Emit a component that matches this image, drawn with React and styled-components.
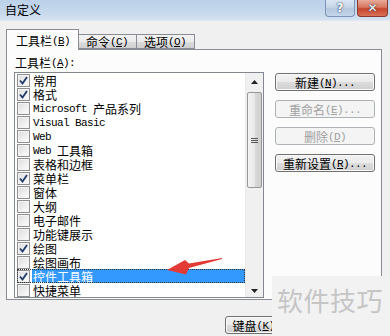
import React from "react";
import styled, { createGlobalStyle } from "styled-components";

const GlobalStyle = createGlobalStyle`
  html, body {
    margin: 0;
    padding: 0;
    background: #f0f0f0;
  }
  body {
    font-family: "Noto Sans CJK SC", "Noto Sans", sans-serif;
    font-size: 12px;
    color: #000;
  }
`;

const Window = styled.div`
  position: relative;
  width: 390px;
  height: 336px;
  overflow: hidden;
  display: flex;
  flex-direction: column;
  background: #f0f0f0;
`;

const TitleBar = styled.div`
  height: 20px;
  flex: none;
  display: flex;
  align-items: flex-start;
  background: linear-gradient(to bottom, #bcd1e9 0%, #c6d8ec 60%, #d4e2f1 100%);
  border-bottom: 1px solid #dfe8f2;
`;

const Title = styled.div`
  flex: 1;
  padding: 2px 0 0 5px;
  font-size: 12px;
  line-height: 16px;
  color: #000;
`;

const CaptionButton = styled.div`
  height: 17px;
  display: flex;
  align-items: center;
  justify-content: center;
  box-sizing: border-box;
  border: 1px solid ${(p) => (p.$close ? "#8a3a2e" : "#7b94b8")};
  border-top: none;
  border-radius: 0 0 4px 4px;
  background: ${(p) =>
    p.$close
      ? "linear-gradient(to bottom, #e9a999 0%, #d7785f 45%, #c5452c 55%, #d9725a 100%)"
      : "linear-gradient(to bottom, #dbe6f3 0%, #c7d6e8 45%, #b3c7de 55%, #c4d6ea 100%)"};
  width: ${(p) => (p.$close ? "31px" : "30px")};
  margin-right: 2px;
  color: #fff;
  font-family: "DejaVu Sans", sans-serif;
  font-weight: bold;
  font-size: 12px;
  line-height: 14px;
  text-shadow: 0 0 2px #2b3f5c, 0 0 1px #2b3f5c;
`;

const Body = styled.div`
  flex: 1;
  display: flex;
  flex-direction: column;
  padding: 8px 8px 0 6px;
`;

const TabStrip = styled.div`
  display: flex;
  align-items: flex-end;
  height: 20px;
  position: relative;
  z-index: 1;
`;

const Tab = styled.div`
  box-sizing: border-box;
  width: ${(p) => p.$w}px;
  height: ${(p) => (p.$active ? "21px" : "15px")};
  margin-bottom: ${(p) => (p.$active ? "-1px" : "0")};
  padding-left: ${(p) => (p.$active ? "9px" : "7px")};
  display: flex;
  align-items: center;
  border: 1px solid #898c95;
  border-bottom: ${(p) => (p.$active ? "none" : "1px solid #898c95")};
  border-left: ${(p) => (p.$first ? "1px solid #898c95" : "none")};
  background: ${(p) =>
    p.$active ? "#fcfcfc" : "linear-gradient(to bottom, #f2f2f2 0%, #ebebeb 50%, #dddddd 51%, #cfcfcf 100%)"};
  font-size: 12px;
  line-height: 13px;
  white-space: nowrap;
`;

const Panel = styled.div`
  box-sizing: border-box;
  width: 376px;
  height: 251px;
  border: 1px solid #898c95;
  background: #fcfcfc;
  display: flex;
  gap: 11px;
  padding: 0 0 0 7px;
`;

const LeftColumn = styled.div`
  display: flex;
  flex-direction: column;
  width: 250px;
`;

const FieldLabel = styled.div`
  height: 22px;
  padding: 3px 0 0 1px;
  display: flex;
  align-items: center;
  box-sizing: border-box;
  font-size: 12px;
  line-height: 14px;
`;

const ListBox = styled.div`
  box-sizing: border-box;
  height: 226px;
  border: 1px solid #828790;
  background: #fff;
  display: flex;
  overflow: hidden;
`;

const Rows = styled.div`
  flex: 1;
  display: flex;
  flex-direction: column;
  padding-left: 2px;
  overflow: hidden;
`;

const Row = styled.div`
  height: 14px;
  flex: none;
  display: flex;
  align-items: center;
  gap: 2px;
  outline: ${(p) => (p.$focus ? "1px dotted #333" : "none")};
  outline-offset: -1px;
`;

const Box = styled.span`
  box-sizing: border-box;
  width: 13px;
  height: 13px;
  flex: none;
  border: 1px solid #8e8f8f;
  background: linear-gradient(135deg, #dcdcdc 0%, #f0f0f0 60%, #fdfdfd 100%);
  box-shadow: inset 0 0 0 1px #f4f4f4;
  display: flex;
  align-items: center;
  justify-content: center;
`;

const ItemText = styled.span`
  height: 14px;
  display: flex;
  align-items: center;
  padding: 0 1px;
  flex: ${(p) => (p.$selected ? "1" : "none")};
  background: ${(p) => (p.$selected ? "#3399ff" : "transparent")};
  color: ${(p) => (p.$selected ? "#fff" : "#000")};
  font-size: 12px;
  white-space: pre;
`;

const Han = styled.span`
  display: inline-block;
  height: 13px;
  line-height: 13px;
`;

const Latin = styled.span`
  display: inline-block;
  height: 13px;
  line-height: 13px;
  margin-top: 2px;
  font-family: "Liberation Mono", monospace;
  font-size: 11px;
  letter-spacing: -0.6px;
  white-space: pre;
`;

const ScrollBar = styled.div`
  width: 17px;
  flex: none;
  display: flex;
  flex-direction: column;
  background: #f0f0f0;
  border-left: 1px solid #eaeaea;
`;

const Arrow = styled.div`
  height: ${(p) => (p.$down ? "auto" : "17px")};
  flex: ${(p) => (p.$down ? "1" : "none")};
  display: flex;
  justify-content: center;
  align-items: ${(p) => (p.$down ? "flex-end" : "center")};
  padding-bottom: ${(p) => (p.$down ? "4px" : "0")};
`;

const Thumb = styled.div`
  box-sizing: border-box;
  margin: 2px 1px 0 1px;
  height: 96px;
  border: 1px solid #979797;
  border-radius: 2px;
  background: linear-gradient(to right, #f3f3f3 0%, #e8e8e8 50%, #d9d9d9 51%, #d0d0d0 100%);
  display: flex;
  align-items: center;
  justify-content: center;
`;

const ButtonColumn = styled.div`
  display: flex;
  flex-direction: column;
  gap: 9px;
  padding-top: 23px;
`;

const Button = styled.div`
  box-sizing: border-box;
  width: ${(p) => p.$w || 100}px;
  height: 18px;
  border: 1px solid ${(p) => (p.$disabled ? "#adb2b5" : "#707070")};
  border-radius: 3px;
  background: ${(p) =>
    p.$disabled
      ? "#f4f4f4"
      : "linear-gradient(to bottom, #f2f2f2 0%, #ebebeb 50%, #dddddd 51%, #cfcfcf 100%)"};
  color: ${(p) => (p.$disabled ? "#a0a0a0" : "#000")};
  box-shadow: inset 0 0 0 1px ${(p) => (p.$disabled ? "#f4f4f4" : "#fafafa")};
  display: flex;
  align-items: center;
  justify-content: center;
  font-size: 12px;
  line-height: 13px;
  white-space: nowrap;
`;

const Footer = styled.div`
  display: flex;
  padding: 16px 0 0 219px;
`;

const Cover = styled.div`
  position: absolute;
  left: 272px;
  top: 276px;
  right: 0;
  bottom: 0;
  background: #f2f2f2;
  display: flex;
  align-items: flex-start;
  padding: 9px 0 0 5px;
  color: #c6c6c6;
  font-size: 26px;
  line-height: 30px;
  letter-spacing: 0.5px;
`;

const ArrowMark = styled.svg`
  position: absolute;
  left: 164px;
  top: 254px;
`;

const items = [
  ["常用", true],
  ["格式", true],
  ["Microsoft 产品系列", false],
  ["Visual Basic", false],
  ["Web", false],
  ["Web 工具箱", false],
  ["表格和边框", false],
  ["菜单栏", true],
  ["窗体", false],
  ["大纲", false],
  ["电子邮件", false],
  ["功能键展示", false],
  ["绘图", true],
  ["绘图画布", false],
  ["控件工具箱", true],
  ["快捷菜单", false],
];

// wrap ASCII runs so they get the narrow half-width font
const Txt = ({ children }) =>
  children
    .split(/([\x20-\x7e]+)/)
    .filter(Boolean)
    .map((part, i) =>
      /^[\x20-\x7e]+$/.test(part) ? <Latin key={i}>{part}</Latin> : <Han key={i}>{part}</Han>
    );

const Mn = ({ pre, k, post = "" }) => (
  <>
    <Han>{pre}</Han>
    <Latin>
      (<u>{k}</u>){post}
    </Latin>
  </>
);

const Check = ({ checked }) => (
  <Box>
    {checked && (
      <svg width="9" height="9" viewBox="0 0 9 9">
        <path d="M1 4.5 L3.5 7.5 L8 1" fill="none" stroke="#1f3a68" strokeWidth="1.8" />
      </svg>
    )}
  </Box>
);

const App = () => (
  <>
    <GlobalStyle />
    <Window>
      <TitleBar>
        <Title>自定义</Title>
        <CaptionButton>?</CaptionButton>
        <CaptionButton $close>✕</CaptionButton>
      </TitleBar>
      <Body>
        <TabStrip>
          <Tab $active $first $w={73}>
            <Mn pre="工具栏" k="B" />
          </Tab>
          <Tab $w={58}>
            <Mn pre="命令" k="C" />
          </Tab>
          <Tab $w={58}>
            <Mn pre="选项" k="O" />
          </Tab>
        </TabStrip>
        <Panel>
          <LeftColumn>
            <FieldLabel>
              <Mn pre="工具栏" k="A" post=":" />
            </FieldLabel>
            <ListBox>
              <Rows>
                {items.map(([label, checked], i) => (
                  <Row key={label} $focus={i === 14}>
                    <Check checked={checked} />
                    <ItemText $selected={i === 14}>
                      <Txt>{label}</Txt>
                    </ItemText>
                  </Row>
                ))}
              </Rows>
              <ScrollBar>
                <Arrow>
                  <svg width="7" height="4" viewBox="0 0 7 4">
                    <path d="M0 4 L3.5 0 L7 4 Z" fill="#222" />
                  </svg>
                </Arrow>
                <Thumb>
                  <svg width="7" height="7" viewBox="0 0 7 7">
                    <path d="M0 1.5 H7 M0 3.5 H7 M0 5.5 H7" stroke="#555" strokeWidth="1" />
                  </svg>
                </Thumb>
                <Arrow $down>
                  <svg width="7" height="4" viewBox="0 0 7 4">
                    <path d="M0 0 L3.5 4 L7 0 Z" fill="#222" />
                  </svg>
                </Arrow>
              </ScrollBar>
            </ListBox>
          </LeftColumn>
          <ButtonColumn>
            <Button>
              <Mn pre="新建" k="N" post="..." />
            </Button>
            <Button $disabled>
              <Mn pre="重命名" k="E" post="..." />
            </Button>
            <Button $disabled>
              <Mn pre="删除" k="D" />
            </Button>
            <Button>
              <Mn pre="重新设置" k="R" post="..." />
            </Button>
          </ButtonColumn>
        </Panel>
        <Footer>
          <Button $w={75}>
            <Mn pre="键盘" k="K" post="..." />
          </Button>
        </Footer>
      </Body>
      <ArrowMark width="60" height="24" viewBox="0 0 60 24">
        <path d="M58 4 L25 9.5 L21 6 L3 16 L22 20.5 L25 14 L58 5 Z" fill="#e23b36" />
      </ArrowMark>
      <Cover>软件技巧</Cover>
    </Window>
  </>
);

export default App;
